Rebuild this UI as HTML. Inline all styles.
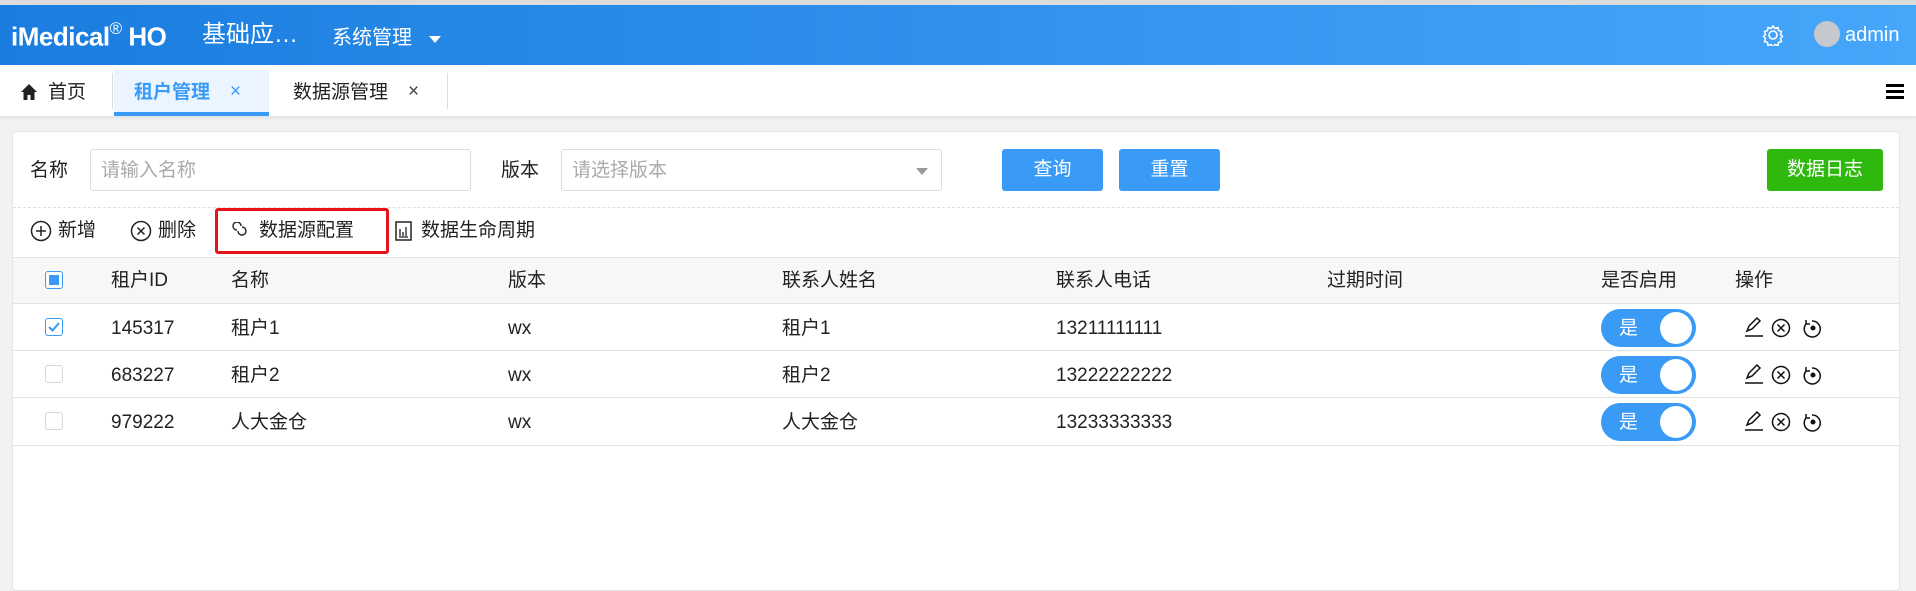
<!DOCTYPE html>
<html><head><meta charset="utf-8"><style>
*{box-sizing:border-box;margin:0;padding:0}
body{width:1916px;height:579px;overflow:hidden;background:#f2f2f2;font-family:"Liberation Sans","Noto Sans CJK SC",sans-serif;color:#222;position:relative}
.abs{position:absolute}
.top{left:0;top:0;width:1916px;height:5px;background:#dcdcdc}
.hdr{left:0;top:5px;width:1916px;height:60px;background:linear-gradient(90deg,#1a7ddf,#46a6fa)}
.tabs{left:0;top:65px;width:1916px;height:51px;background:#fff;box-shadow:0 2px 3px rgba(0,0,0,.08)}
.card{left:12px;top:131px;width:1888px;height:460px;background:#fff;border:1px solid #e4e4e4;border-radius:4px}
.t{white-space:nowrap;font-size:19px;line-height:24px;height:24px}
.inp{border:1px solid #dcdcdc;border-radius:3px;height:42px;background:#fff}
.btn{background:#3a9bf6;color:#fff;border-radius:3px;height:42px;text-align:center;line-height:42px;font-size:19px}
.row{left:13px;width:1886px;border-bottom:1px solid #e2e2e2}
.cb{width:18px;height:18px;border:1px solid #d8d8d8;border-radius:3px;background:#fff}
.sw{width:95px;height:38px;border-radius:19px;background:#3a9bf6}
.sw::after{content:"";position:absolute;right:4px;top:3px;width:32px;height:32px;border-radius:50%;background:#fff}
.sw span{position:absolute;left:18px;top:8px;color:#fff;font-size:19px;line-height:24px}
</style></head><body>
<div class="abs top"></div>
<div class="abs hdr"></div>
<div class="abs t" style="left:11px;top:16px;color:#fff;font-weight:bold;font-size:26px;line-height:30px;height:30px;letter-spacing:-0.5px">iMedical<sup style="font-size:17px;font-weight:normal;position:relative;top:-2px">®</sup> HO</div>
<div class="abs t" style="left:202px;top:20px;color:#fff;font-size:24px;line-height:30px;height:30px">基础应…</div>
<div class="abs t" style="left:332px;top:26px;color:#fff;font-size:20px">系统管理</div>
<div class="abs" style="left:429px;top:36px;border:6px solid transparent;border-top:7px solid #fff;border-bottom:none"></div>
<svg class="abs" style="left:1762px;top:24px" width="22" height="22" viewBox="0 0 22 22"><circle cx="11" cy="11" r="4" fill="none" stroke="#fff" stroke-width="1.6"/><path d="M11 2l2 2.5 3-1 .5 3 3 1-1 3 2 2-2 2 1 3-3 1-.5 3-3-1-2 2.5-2-2.5-3 1-.5-3-3-1 1-3-2-2 2-2-1-3 3-1 .5-3 3 1z" fill="none" stroke="#fff" stroke-width="1.5"/></svg>
<div class="abs" style="left:1814px;top:21px;width:26px;height:26px;border-radius:50%;background:#c5c8cd"></div>
<div class="abs t" style="left:1845px;top:23px;color:#fff;font-size:20px">admin</div>
<div class="abs tabs"></div>
<div class="abs" style="left:114px;top:70px;width:155px;height:46px;background:#eaf5ff;border-bottom:4px solid #3a9bf6"></div>
<div class="abs" style="left:112px;top:73px;width:1px;height:36px;background:#ddd"></div>
<div class="abs" style="left:447px;top:73px;width:1px;height:36px;background:#ddd"></div>
<svg class="abs" style="left:20px;top:83px" width="18" height="18" viewBox="0 0 18 18"><path d="M9 1L1 9h2.5v8h4v-5h3v5h4V9H17z" fill="#222"/></svg>
<div class="abs t" style="left:48px;top:81px">首页</div>
<div class="abs t" style="left:134px;top:81px;color:#3a9bf6;font-weight:bold">租户管理</div>
<div class="abs t" style="left:230px;top:80px;color:#3a9bf6">×</div>
<div class="abs t" style="left:293px;top:81px">数据源管理</div>
<div class="abs t" style="left:408px;top:80px;color:#444">×</div>
<div class="abs" style="left:1886px;top:84px;width:18px;height:3px;background:#000;box-shadow:0 6px 0 #000,0 12px 0 #000"></div>
<div class="abs card"></div>
<div class="abs t" style="left:30px;top:159px">名称</div>
<div class="abs inp" style="left:90px;top:149px;width:381px"></div>
<div class="abs t" style="left:101px;top:159px;color:#aaa">请输入名称</div>
<div class="abs t" style="left:501px;top:159px">版本</div>
<div class="abs inp" style="left:561px;top:149px;width:381px"></div>
<div class="abs t" style="left:572px;top:159px;color:#aaa">请选择版本</div>
<div class="abs" style="left:916px;top:168px;border:6px solid transparent;border-top:7px solid #999;border-bottom:none"></div>
<div class="abs btn" style="left:1002px;top:149px;width:101px">查询</div>
<div class="abs btn" style="left:1119px;top:149px;width:101px">重置</div>
<div class="abs btn" style="left:1767px;top:149px;width:116px;background:#2fb90f">数据日志</div>
<div class="abs" style="left:13px;top:207px;width:1886px;border-top:1px dashed #e0e0e0"></div>
<svg class="abs" style="left:30px;top:220px" width="22" height="22"><circle cx="11" cy="11" r="9.5" fill="none" stroke="#222" stroke-width="1.5"/><path d="M11 6v10M6 11h10" stroke="#222" stroke-width="1.5"/></svg>
<div class="abs t" style="left:58px;top:219px">新增</div>
<svg class="abs" style="left:130px;top:220px" width="22" height="22"><circle cx="11" cy="11" r="9.5" fill="none" stroke="#222" stroke-width="1.5"/><path d="M7.5 7.5l7 7M14.5 7.5l-7 7" stroke="#222" stroke-width="1.5"/></svg>
<div class="abs t" style="left:158px;top:219px">删除</div>
<div class="abs" style="left:215px;top:208px;width:174px;height:46px;border:3px solid #e8141b;border-radius:3px"></div>
<svg class="abs" style="left:232px;top:222px" width="18" height="18"><path d="M9 4a4 4 0 1 0-4 4M6 9a4 4 0 1 0 8 0 4 4 0 0 0-4-4" fill="none" stroke="#222" stroke-width="1.4"/></svg>
<div class="abs t" style="left:259px;top:219px">数据源配置</div>
<svg class="abs" style="left:395px;top:221px" width="18" height="20"><rect x="1" y="1" width="15" height="18" fill="none" stroke="#222" stroke-width="1.5"/><path d="M5 8v7M8 11v4M11 6v9M4 16h9" stroke="#222" stroke-width="1.3"/></svg>
<div class="abs t" style="left:421px;top:219px">数据生命周期</div>
<div class="abs row" style="top:257px;height:47px;background:#f7f7f7;border-top:1px solid #e2e2e2"></div>
<div class="abs row" style="top:304px;height:47px"></div>
<div class="abs row" style="top:351px;height:47px"></div>
<div class="abs row" style="top:398px;height:48px"></div>
<div class="abs cb" style="left:45px;top:271px;border-color:#3a9bf6"><div style="margin:3px;width:10px;height:10px;background:#3a9bf6"></div></div>
<div class="abs cb" style="left:45px;top:318px;border-color:#3a9bf6"><svg width="16" height="16"><path d="M3 8l3.5 3.5L13 4" fill="none" stroke="#3a9bf6" stroke-width="2"/></svg></div>
<div class="abs cb" style="left:45px;top:365px"></div>
<div class="abs cb" style="left:45px;top:412px"></div>
<div class="abs t" style="left:111px;top:269px">租户ID</div><div class="abs t" style="left:231px;top:269px">名称</div><div class="abs t" style="left:508px;top:269px">版本</div><div class="abs t" style="left:782px;top:269px">联系人姓名</div><div class="abs t" style="left:1056px;top:269px">联系人电话</div><div class="abs t" style="left:1327px;top:269px">过期时间</div><div class="abs t" style="left:1601px;top:269px">是否启用</div><div class="abs t" style="left:1735px;top:269px">操作</div>
<div class="abs t" style="left:111px;top:317px">145317</div><div class="abs t" style="left:231px;top:317px">租户1</div><div class="abs t" style="left:508px;top:317px">wx</div><div class="abs t" style="left:782px;top:317px">租户1</div><div class="abs t" style="left:1056px;top:317px">13211111111</div>
<div class="abs t" style="left:111px;top:364px">683227</div><div class="abs t" style="left:231px;top:364px">租户2</div><div class="abs t" style="left:508px;top:364px">wx</div><div class="abs t" style="left:782px;top:364px">租户2</div><div class="abs t" style="left:1056px;top:364px">13222222222</div>
<div class="abs t" style="left:111px;top:411px">979222</div><div class="abs t" style="left:231px;top:411px">人大金仓</div><div class="abs t" style="left:508px;top:411px">wx</div><div class="abs t" style="left:782px;top:411px">人大金仓</div><div class="abs t" style="left:1056px;top:411px">13233333333</div>
<div class="abs sw" style="left:1601px;top:309px"><span>是</span></div>
<div class="abs sw" style="left:1601px;top:356px"><span>是</span></div>
<div class="abs sw" style="left:1601px;top:403px"><span>是</span></div>
<svg class="abs" style="left:1742px;top:316px" width="100" height="130">
<g id="ic" fill="none" stroke="#111" stroke-width="1.5">
<path d="M5 15l2-5 8-8 3 3-8 8zM3 20h18"/>
<circle cx="39" cy="12" r="8.5"/><path d="M35.5 8.5l7 7M42.5 8.5l-7 7"/>
<path d="M70 5a8 8 0 1 1-6 3M64 4v4h4"/><circle cx="71" cy="12" r="1.8" fill="#111"/>
</g>
<use href="#ic" y="47"/><use href="#ic" y="94"/>
</svg>
</body></html>
